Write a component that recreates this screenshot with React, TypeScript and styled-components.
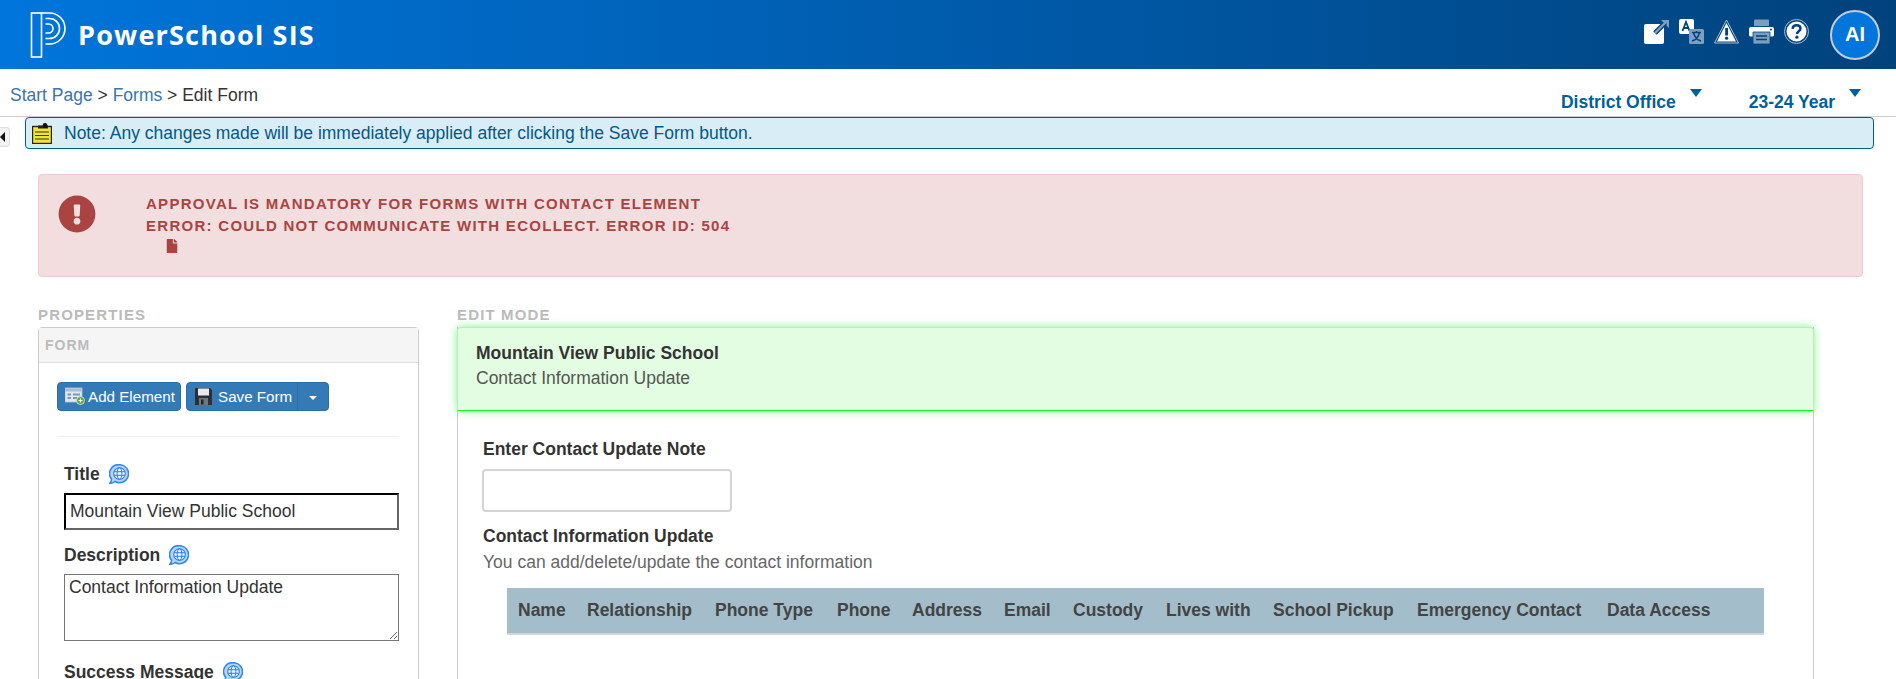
import * as React from "react";
import styled, { createGlobalStyle } from "styled-components";
import { FaExclamationCircle, FaFile } from "react-icons/fa";

const GlobalStyle = createGlobalStyle`
  html, body {
    margin: 0;
    padding: 0;
    background: #fff;
    overflow: hidden;
  }
  body {
    font-family: "Liberation Sans", Arial, sans-serif;
    font-size: 17.5px;
    color: #333;
  }
  * {
    box-sizing: border-box;
  }
`;

const columns = [
  "Name",
  "Relationship",
  "Phone Type",
  "Phone",
  "Address",
  "Email",
  "Custody",
  "Lives with",
  "School Pickup",
  "Emergency Contact",
  "Data Access",
];

const Logo = () => (
  <svg width="36" height="46" viewBox="0 0 36 46" fill="none" stroke="#fff" strokeWidth="1.6">
    <rect x="1.5" y="1" width="10" height="44" />
    <path d="M11.5 1H19.5A15.5 15.5 0 0 1 19.5 32H15.5" />
    <path d="M15.5 6.5H19.5A10 10 0 0 1 19.5 26.5H15.5" />
    <path d="M15.5 12H18.5A4.5 4.5 0 0 1 18.5 21H15.5" />
  </svg>
);

const ExternalIcon = () => (
  <svg width="25" height="25" viewBox="0 0 25 25">
    <rect x="0" y="5" width="20" height="20" rx="2" fill="#fff" />
    <path d="M11 14L22 3" stroke="#00427c" strokeWidth="5" />
    <path d="M11 14L22 3" stroke="#7d9ebd" strokeWidth="2.4" />
    <path d="M17 1H25V9L22.5 6.5V3.5H19.5Z" fill="#7d9ebd" />
  </svg>
);

const TranslateIcon = () => (
  <svg width="25" height="25" viewBox="0 0 25 25">
    <rect x="0" y="0" width="15" height="15" rx="2" fill="#fff" />
    <path d="M3.5 12L7 3L10.5 12M5 9H9" fill="none" stroke="#00427c" strokeWidth="1.8" />
    <rect x="10" y="10" width="15" height="15" rx="1.5" fill="#7d9ebd" />
    <path d="M13 13.5H22M17.5 12V13.5M14.5 13.5C15.5 18 18.5 21 22 22M20.5 13.5C19.5 18 16.5 21 13 22" fill="none" stroke="#00427c" strokeWidth="1.4" />
  </svg>
);

const WarningIcon = () => (
  <svg width="25" height="25" viewBox="0 0 25 25">
    <path d="M12.5 1L24.5 24H0.5Z" fill="none" stroke="#a9bdd0" strokeWidth="1" />
    <path d="M12.5 4L22 22.5H3Z" fill="#fff" />
    <rect x="11.2" y="9" width="2.8" height="7.5" fill="#00427c" />
    <circle cx="12.6" cy="19.2" r="1.6" fill="#00427c" />
  </svg>
);

const PrintIcon = () => (
  <svg width="25" height="25" viewBox="0 0 25 25">
    <path d="M5 1.5Q5 0.5 6 0.5H19Q20 0.5 20 1.5V7H5Z" fill="#7d9ebd" />
    <path d="M2 8H23Q25 8 25 10V16Q25 17.5 23 17.5H2Q0 17.5 0 16V10Q0 8 2 8Z" fill="#fff" />
    <circle cx="22" cy="10.5" r="1" fill="#00427c" />
    <path d="M4 13H21V23.5Q21 25 19.5 25H5.5Q4 25 4 23.5Z" fill="#7d9ebd" stroke="#00427c" strokeWidth="0.8" />
    <path d="M7 17H18M7 20.5H18" stroke="#00427c" strokeWidth="1.4" />
  </svg>
);

const HelpIcon = () => (
  <svg width="25" height="25" viewBox="0 0 25 25">
    <circle cx="12.5" cy="12.5" r="12" fill="none" stroke="#a9bdd0" strokeWidth="1" />
    <circle cx="12.5" cy="12.5" r="10" fill="#fff" />
    <path d="M8.6 9.8C8.8 7.5 10.5 6.3 12.6 6.3C15 6.3 16.5 7.7 16.5 9.6C16.5 12.4 13 12.2 13 15" fill="none" stroke="#00427c" strokeWidth="2.5" />
    <circle cx="12.9" cy="18.2" r="1.6" fill="#00427c" />
  </svg>
);

const NoteIcon = () => (
  <svg width="20" height="21" viewBox="0 0 20 21">
    <rect x="0.5" y="3.5" width="19" height="17" fill="#f2e436" stroke="#222" strokeWidth="1.4" />
    <rect x="6" y="2.5" width="10" height="3" fill="#222" />
    <circle cx="13" cy="2.5" r="2.4" fill="#111" />
    <path d="M3 9H17M3 12.5H17M3 16H17" stroke="#333" strokeWidth="1.2" />
  </svg>
);

const AddElementIcon = () => (
  <svg width="20" height="18" viewBox="0 0 20 18">
    <rect x="0" y="1" width="17" height="14" fill="#dfe8f2" stroke="#b4c5d8" strokeWidth="0.8" />
    <rect x="0.5" y="1.5" width="16" height="3" fill="#a9bcd2" />
    <path d="M2.5 7.5H6M2.5 11H6M8 7.5H15M8 11H12" stroke="#7d98b8" strokeWidth="1.8" />
    <circle cx="15.5" cy="13.5" r="4" fill="#5da83c" stroke="#d8efd0" strokeWidth="0.8" />
    <path d="M13.5 13.5H17.5M15.5 11.5V15.5" stroke="#fff" strokeWidth="1.2" />
  </svg>
);

const SaveIcon = () => (
  <svg width="17" height="18" viewBox="0 0 17 18">
    <path d="M0 1H15L17 3V18H0Z" fill="#2c2f33" />
    <rect x="3" y="1.5" width="11" height="7" fill="#e8eaec" />
    <rect x="4" y="11" width="9" height="7" fill="#6d7780" />
    <rect x="6" y="12.5" width="2.5" height="5" fill="#22262a" />
  </svg>
);

const GlobeIcon = () => (
  <svg width="20" height="20" viewBox="0 0 20 20" fill="none">
    <path d="M10.5 0.7A9 9 0 1 1 6 17.5Q3.5 19.5 0.8 19.3Q2.5 17.5 2.6 15.3A9 9 0 0 1 10.5 0.7Z" fill="#b5d6fb" stroke="#2f86f2" strokeWidth="1.5" />
    <circle cx="10.5" cy="9.5" r="5.8" fill="#eaf4ff" stroke="#2f7fe6" strokeWidth="1.1" />
    <ellipse cx="10.5" cy="9.5" rx="2.4" ry="5.8" stroke="#2f7fe6" strokeWidth="1" />
    <path d="M5 7.7H16M5 11.3H16" stroke="#2f7fe6" strokeWidth="1" />
  </svg>
);

export default function App() {
  return (
    <Page>
      <GlobalStyle />
      <TopBar>
        <Brand>
          <Logo />
          <BrandName>PowerSchool SIS</BrandName>
        </Brand>
        <TopActions>
          <IconRow>
            <ExternalIcon />
            <TranslateIcon />
            <WarningIcon />
            <PrintIcon />
            <HelpIcon />
          </IconRow>
          <Avatar>AI</Avatar>
        </TopActions>
      </TopBar>

      <CrumbBar>
        <Crumbs>
          <CrumbLink>Start Page</CrumbLink> &gt; <CrumbLink>Forms</CrumbLink> &gt; <CrumbCurrent>Edit Form</CrumbCurrent>
        </Crumbs>
        <Selectors>
          <Selector>
            District Office
            <Caret />
          </Selector>
          <Selector>
            23-24 Year
            <Caret />
          </Selector>
        </Selectors>
      </CrumbBar>

      <SideTab>
        <SideArrow />
      </SideTab>

      <NoteBar>
        <NoteIcon />
        Note: Any changes made will be immediately applied after clicking the Save Form button.
      </NoteBar>

      <Content>
        <ErrorBox>
          <ErrorIcon>
            <FaExclamationCircle size={38} />
          </ErrorIcon>
          <ErrorText>
            <ErrorLine>Approval is mandatory for forms with Contact Element</ErrorLine>
            <ErrorLine>Error: Could not communicate with eCollect. Error ID: 504</ErrorLine>
            <DocIcon>
              <FaFile size={14} />
            </DocIcon>
          </ErrorText>
        </ErrorBox>

        <Columns>
          <PropertiesColumn>
            <SectionLabel>Properties</SectionLabel>
            <Panel>
              <PanelHead>Form</PanelHead>
              <PanelBody>
                <ButtonRow>
                  <ActionButton>
                    <AddElementIcon />
                    Add Element
                  </ActionButton>
                  <SplitButton>
                    <SplitMain>
                      <SaveIcon />
                      Save Form
                    </SplitMain>
                    <SplitToggle>
                      <ToggleCaret />
                    </SplitToggle>
                  </SplitButton>
                </ButtonRow>
                <Divider />
                <FieldList>
                  <FieldLabel>
                    Title <GlobeIcon />
                  </FieldLabel>
                  <TitleInput defaultValue="Mountain View Public School" />
                  <FieldLabel>
                    Description <GlobeIcon />
                  </FieldLabel>
                  <DescriptionArea defaultValue="Contact Information Update" />
                  <FieldLabel>
                    Success Message <GlobeIcon />
                  </FieldLabel>
                </FieldList>
              </PanelBody>
            </Panel>
          </PropertiesColumn>

          <EditColumn>
            <SectionLabel>Edit Mode</SectionLabel>
            <EditPanel>
              <FormHeader>
                <FormTitle>Mountain View Public School</FormTitle>
                <FormSubtitle>Contact Information Update</FormSubtitle>
              </FormHeader>
              <EditBody>
                <BoldLabel>Enter Contact Update Note</BoldLabel>
                <NoteInput />
                <BoldLabel>Contact Information Update</BoldLabel>
                <HelpText>You can add/delete/update the contact information</HelpText>
                <ContactHead>
                  {columns.map((name) => (
                    <ContactColumn key={name}>{name}</ContactColumn>
                  ))}
                </ContactHead>
              </EditBody>
            </EditPanel>
          </EditColumn>
        </Columns>
      </Content>
    </Page>
  );
}

const Page = styled.div`
  position: relative;
  height: 679px;
  overflow: hidden;
`;

const TopBar = styled.header`
  height: 69px;
  padding: 0 16px 0 30px;
  display: flex;
  align-items: center;
  justify-content: space-between;
  background: linear-gradient(90deg, #0075db 0%, #00427c 100%);
`;

const Brand = styled.div`
  display: flex;
  align-items: center;
  gap: 12px;
  color: #fff;
`;

const BrandName = styled.span`
  font-family: "Open Sans", sans-serif;
  font-size: 27px;
  font-weight: 700;
  letter-spacing: 1.2px;
`;

const TopActions = styled.div`
  display: flex;
  align-items: center;
  gap: 21px;
`;

const IconRow = styled.div`
  display: flex;
  gap: 10px;
  margin-top: -6px;

  svg {
    display: block;
  }
`;

const Avatar = styled.div`
  width: 50px;
  height: 50px;
  border-radius: 50%;
  border: 2px solid #c3ccd4;
  background: #0075db;
  color: #fff;
  font-size: 20px;
  font-weight: 700;
  display: flex;
  align-items: center;
  justify-content: center;
`;

const CrumbBar = styled.div`
  height: 48px;
  padding: 0 35px 0 10px;
  display: flex;
  justify-content: space-between;
  border-bottom: 1px solid #ccc;
`;

const Crumbs = styled.div`
  padding-top: 16px;
  color: #333;
`;

const CrumbLink = styled.a`
  color: #3b73af;
`;

const CrumbCurrent = styled.span`
  color: #333;
`;

const Selectors = styled.div`
  display: flex;
  gap: 47px;
`;

const Selector = styled.div`
  display: flex;
  align-items: flex-start;
  gap: 14px;
  padding-top: 23px;
  font-weight: 700;
  color: #00609c;
`;

const Caret = styled.span`
  width: 0;
  height: 0;
  margin-top: -3px;
  border-left: 6.5px solid transparent;
  border-right: 6.5px solid transparent;
  border-top: 8px solid #00609c;
`;

const SideTab = styled.div`
  position: absolute;
  left: -4px;
  top: 127px;
  width: 14px;
  height: 20px;
  background: #f2f2f2;
  border: 1px solid #ddd;
  border-radius: 3px;
  display: flex;
  align-items: center;
  justify-content: flex-end;
  padding-right: 4px;
`;

const SideArrow = styled.span`
  width: 0;
  height: 0;
  border-top: 5px solid transparent;
  border-bottom: 5px solid transparent;
  border-right: 5px solid #111;
`;

const NoteBar = styled.div`
  height: 32px;
  margin: 0 22px 0 25px;
  padding-left: 6px;
  display: flex;
  align-items: center;
  gap: 12px;
  background: #d9edf7;
  border: 1px solid #00608c;
  border-radius: 4px;
  color: #005a87;
`;

const Content = styled.main`
  padding: 25px 32px 0 38px;
`;

const ErrorBox = styled.section`
  width: 1825px;
  height: 103px;
  padding: 20px 0 0 19px;
  display: flex;
  background: #f2dede;
  border: 1px solid #ebccd1;
  border-radius: 4px;
  color: #a94442;
`;

const ErrorIcon = styled.div`
  width: 88px;
`;

const ErrorText = styled.div``;

const ErrorLine = styled.div`
  height: 22px;
  line-height: 18px;
  font-size: 15px;
  font-weight: 700;
  letter-spacing: 1.28px;
  text-transform: uppercase;
`;

const DocIcon = styled.div`
  margin-top: -2px;
  padding-left: 19px;
`;

const Columns = styled.div`
  display: flex;
  margin-top: 29px;
`;

const PropertiesColumn = styled.div`
  width: 381px;
  margin-right: 38px;
  flex: none;
`;

const EditColumn = styled.div`
  width: 1357px;
  flex: none;
`;

const SectionLabel = styled.div`
  height: 21px;
  padding-top: 1px;
  font-size: 15px;
  line-height: 16px;
  font-weight: 700;
  letter-spacing: 1.15px;
  text-transform: uppercase;
  color: #bbb;
`;

const Panel = styled.div`
  height: 400px;
  border: 1px solid #ccc;
  border-radius: 4px 4px 0 0;
`;

const PanelHead = styled.div`
  height: 35px;
  padding-left: 6px;
  line-height: 35px;
  font-size: 14px;
  font-weight: 700;
  letter-spacing: 1px;
  text-transform: uppercase;
  color: #bbb;
  background: #f5f5f5;
  border-bottom: 1px solid #ddd;
`;

const PanelBody = styled.div`
  padding: 19px 19px 0 18px;
`;

const ButtonRow = styled.div`
  display: flex;
  gap: 5px;
`;

const ActionButton = styled.div`
  height: 29px;
  width: 124px;
  padding: 0 0 1px 7px;
  display: flex;
  align-items: center;
  gap: 3px;
  font-size: 15.2px;
  color: #fff;
  background: #337ab7;
  border: 1px solid #2e6da4;
  border-radius: 4px;
`;

const SplitButton = styled.div`
  height: 29px;
  width: 143px;
  display: flex;
  color: #fff;
  background: #337ab7;
  border: 1px solid #2e6da4;
  border-radius: 4px;
  font-size: 15.2px;
`;

const SplitMain = styled.div`
  width: 111px;
  padding: 0 0 1px 8px;
  display: flex;
  align-items: center;
  gap: 6px;
  border-right: 1px solid #2e6da4;
  white-space: nowrap;
`;

const SplitToggle = styled.div`
  flex: 1;
  display: flex;
  align-items: center;
  justify-content: center;
`;

const ToggleCaret = styled.span`
  width: 0;
  height: 0;
  margin-top: 2px;
  border-left: 4.5px solid transparent;
  border-right: 4.5px solid transparent;
  border-top: 4.5px solid #fff;
`;

const Divider = styled.div`
  height: 1px;
  margin-top: 25px;
  background: #eee;
`;

const FieldList = styled.div`
  padding: 27px 0 0 7px;
`;

const FieldLabel = styled.div`
  height: 21px;
  display: flex;
  align-items: center;
  gap: 9px;
  font-weight: 700;
  color: #333;

  svg {
    margin-top: -2px;
  }
`;

const TitleInput = styled.input`
  display: block;
  width: 335px;
  height: 37px;
  margin: 8px 0 15px;
  padding: 0 4px;
  font: 17.5px "Liberation Sans", Arial, sans-serif;
  color: #333;
  background: #fff;
  border: 2px inset #767676;
  border-color: #222 #666 #666 #222;
  outline: none;
`;

const DescriptionArea = styled.textarea`
  display: block;
  width: 335px;
  height: 67px;
  margin: 8px 0 21px;
  padding: 2px 4px;
  font: 17.5px "Liberation Sans", Arial, sans-serif;
  color: #333;
  background: #fff;
  border: 1px solid #767676;
  outline: none;
`;

const EditPanel = styled.div`
  height: 400px;
  border-left: 1px solid #ccc;
  border-right: 1px solid #ccc;
`;

const FormHeader = styled.div`
  height: 84px;
  margin: 0 -1px;
  padding: 13px 18px;
  background: #e3fde3;
  border: 1px solid #b8eeb8;
  border-bottom: 1px solid #19f533;
  border-radius: 4px 4px 0 0;
  box-shadow: 0 0 8px rgba(40, 235, 60, 0.6);
`;

const FormTitle = styled.div`
  line-height: 24px;
  font-weight: 700;
  color: #333;
`;

const FormSubtitle = styled.div`
  line-height: 26px;
  color: #555;
`;

const EditBody = styled.div`
  padding: 27px 0 0 25px;
`;

const BoldLabel = styled.div`
  line-height: 22px;
  font-weight: 700;
  color: #333;
`;

const NoteInput = styled.input`
  display: block;
  width: 250px;
  height: 43px;
  margin: 9px 0 13px -1px;
  background: #fff;
  border: 2px solid #d4d4d4;
  border-radius: 4px;
  outline: none;
`;

const HelpText = styled.div`
  line-height: 30px;
  color: #666;
`;

const ContactHead = styled.div`
  width: 1257px;
  height: 47px;
  margin: 11px 0 0 24px;
  padding-left: 11px;
  display: grid;
  grid-template-columns: 69px 128px 122px 75px 92px 69px 93px 107px 144px 190px auto;
  align-items: center;
  background: #a3bdca;
  border-bottom: 2px solid #d0d6db;
`;

const ContactColumn = styled.div`
  font-weight: 700;
  color: #444;
  white-space: nowrap;
`;
